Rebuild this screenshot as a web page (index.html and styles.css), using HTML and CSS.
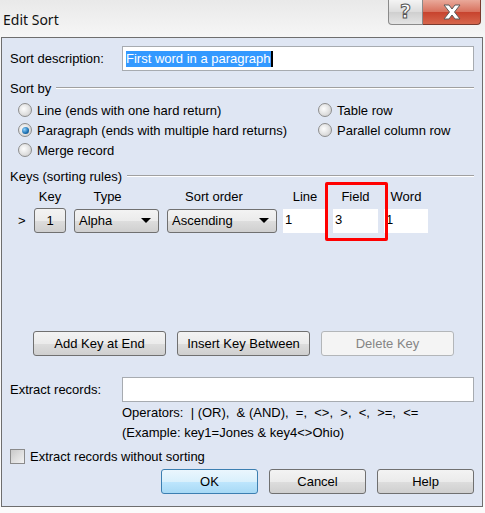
FILE: index.html
```html
<!DOCTYPE html>
<html lang="en">

<head>
  <meta charset="UTF-8">
  <title>Edit Sort</title>
  <link rel="stylesheet" href="styles.css">
</head>

<body>
  <div class="titlebar">
    <div class="title">Edit Sort</div>
    <div class="caption-buttons">
      <div class="cap-help">?</div>
      <div class="cap-close">
        <svg width="22" height="16" viewBox="0 0 22 16">
          <path d="M3 1 L8 1 L11 5 L14 1 L19 1 L13.5 8 L19 15 L14 15 L11 11 L8 15 L3 15 L8.5 8 Z" fill="#fff" stroke="#5a5a5a" stroke-width="1"/>
        </svg>
      </div>
    </div>
  </div>

  <div class="dialog">
    <div class="row desc-row">
      <label class="row-label">Sort description:</label>
      <div class="textbox"><span class="selected">First word in a paragraph</span><span class="caret"></span></div>
    </div>

    <div class="group-title"><span>Sort by</span><span class="rule"></span></div>
    <div class="radio-grid">
      <div class="radio"><span class="dot"></span>Line (ends with one hard return)</div>
      <div class="radio"><span class="dot"></span>Table row</div>
      <div class="radio"><span class="dot checked"></span>Paragraph (ends with multiple hard returns)</div>
      <div class="radio"><span class="dot"></span>Parallel column row</div>
      <div class="radio"><span class="dot"></span>Merge record</div>
    </div>

    <div class="group-title keys-title"><span>Keys (sorting rules)</span><span class="rule"></span></div>
    <div class="keys">
      <div class="keys-head">
        <span></span>
        <span>Key</span>
        <span class="shift-type">Type</span>
        <span class="shift-order">Sort order</span>
        <span>Line</span>
        <span>Field</span>
        <span>Word</span>
      </div>
      <div class="keys-row">
        <span class="pointer">&gt;</span>
        <div class="btn key-btn">1</div>
        <div class="select">Alpha<span class="arrow"></span></div>
        <div class="select">Ascending<span class="arrow"></span></div>
        <div class="cell">1</div>
        <div class="cell">3</div>
        <div class="cell">1</div>
      </div>
      <div class="highlight"></div>
    </div>

    <div class="key-actions">
      <div class="btn">Add Key at End</div>
      <div class="btn">Insert Key Between</div>
      <div class="btn disabled">Delete Key</div>
    </div>

    <div class="row extract-row">
      <label class="row-label">Extract records:</label>
      <div class="textbox"></div>
    </div>
    <div class="hint">
      <div>Operators:&nbsp; | (OR),&nbsp; &amp; (AND),&nbsp; =,&nbsp; &lt;&gt;,&nbsp; &gt;,&nbsp; &lt;,&nbsp; &gt;=,&nbsp; &lt;=</div>
      <div>(Example: key1=Jones &amp; key4&lt;&gt;Ohio)</div>
    </div>

    <div class="check"><span class="box"></span>Extract records without sorting</div>

    <div class="dialog-actions">
      <div class="btn default">OK</div>
      <div class="btn">Cancel</div>
      <div class="btn">Help</div>
    </div>
  </div>
</body>

</html>
```

FILE: styles.css
```css
body {
  margin: 0;
  width: 485px;
  height: 513px;
  overflow: hidden;
  background: linear-gradient(#e9e9e9, #f7f7f7 40px, #fbfbfb);
  font-family: "Liberation Sans", Arial, sans-serif;
  font-size: 13px;
  color: #000;
}

.titlebar {
  height: 37px;
  display: flex;
  justify-content: space-between;
  align-items: flex-start;
}

.title {
  font-family: "Noto Sans", "Open Sans", sans-serif;
  font-size: 14px;
  padding: 10px 0 0 3px;
  color: #111;
}

.caption-buttons {
  display: flex;
  margin-right: 4px;
}

.cap-help {
  width: 33px;
  height: 24px;
  border: 1px solid #8a8a8a;
  border-top: none;
  border-radius: 0 0 0 4px;
  background: linear-gradient(#f4f4f4, #dcdcdc 50%, #cfcfcf 51%, #e4e4e4);
  text-align: center;
  font-family: "DejaVu Sans", sans-serif;
  font-size: 19px;
  font-weight: bold;
  line-height: 23px;
  color: #fff;
  -webkit-text-stroke: 1px #555;
}

.cap-close {
  width: 57px;
  height: 24px;
  border: 1px solid #7a3a2e;
  border-top: none;
  border-left: none;
  border-radius: 0 0 4px 0;
  background: linear-gradient(#e9a99a, #d7705c 50%, #c7432e 51%, #d7664c);
  display: flex;
  align-items: center;
  justify-content: center;
}

.dialog {
  margin-left: 1px;
  width: 464px;
  height: 468px;
  border: 1px solid #6e6e6e;
  background: #dfe6f3;
  padding: 0 8px;
}

.row {
  display: flex;
  align-items: center;
}

.row-label {
  width: 112px;
  flex: none;
}

.textbox {
  flex: 1;
  height: 23px;
  border: 1px solid #a7abb0;
  background: #fff;
  display: flex;
  align-items: center;
  padding-left: 3px;
}

.desc-row {
  margin-top: 8px;
}

.selected {
  background: #3399ff;
  color: #fff;
  line-height: 16px;
}

.caret {
  width: 2px;
  height: 16px;
  background: #000;
}

.group-title {
  display: flex;
  align-items: center;
  gap: 5px;
  margin-top: 9px;
  height: 16px;
}

.rule {
  flex: 1;
  height: 1px;
  background: #a0a0a0;
  border-bottom: 1px solid #fff;
}

.radio-grid {
  display: grid;
  grid-template-columns: 300px 1fr;
  padding-left: 8px;
  margin-top: 4px;
}

.radio {
  display: flex;
  align-items: center;
  height: 20px;
  gap: 5px;
}

.dot {
  width: 12px;
  height: 12px;
  border-radius: 50%;
  border: 1px solid #8d8d8d;
  background: radial-gradient(circle at 40% 40%, #fdfdfd, #d8d8d8 70%, #c4c4c4);
  display: flex;
  align-items: center;
  justify-content: center;
}

.dot.checked::after {
  content: "";
  width: 7px;
  height: 7px;
  border-radius: 50%;
  background: radial-gradient(circle at 35% 35%, #8fd2ff, #1b6fb0 60%, #0b3f6e);
}

.keys-title {
  margin-top: 8px;
}

.keys {
  position: relative;
  margin-top: 5px;
}

.keys-head,
.keys-row {
  display: grid;
  grid-template-columns: 18px 32px 87px 112px 44px 45px 44px;
  column-gap: 6px;
}

.keys-head span {
  text-align: center;
  height: 14px;
}

.keys-head .shift-type {
  padding-right: 16px;
}

.keys-head .shift-order {
  padding-right: 14px;
}

.keys-row {
  margin-top: 5px;
  height: 24px;
  align-items: center;
}

.pointer {
  padding-left: 8px;
}

.btn {
  height: 23px;
  border: 1px solid #707070;
  border-radius: 3px;
  background: linear-gradient(#f3f3f3, #ebebeb 50%, #dddddd 51%, #cfcfcf);
  display: flex;
  align-items: center;
  justify-content: center;
}

.select {
  height: 22px;
  border: 1px solid #707070;
  border-radius: 3px;
  background: linear-gradient(#f3f3f3, #ebebeb 50%, #dddddd 51%, #cfcfcf);
  display: flex;
  align-items: center;
  justify-content: space-between;
  padding: 0 7px 0 4px;
  margin-left: 2px;
}

.arrow {
  width: 0;
  height: 0;
  border-left: 5px solid transparent;
  border-right: 5px solid transparent;
  border-top: 5px solid #000;
}

.cell {
  height: 24px;
  background: #fff;
  padding: 3px 2px 0;
  box-sizing: border-box;
}

.highlight {
  position: absolute;
  left: 315px;
  top: -7px;
  width: 57px;
  height: 53px;
  border: 3px solid #ff0000;
  border-radius: 2px;
}

.key-actions {
  display: flex;
  gap: 11px;
  margin: 99px 0 0 23px;
}

.key-actions .btn {
  width: 131px;
}

.btn.disabled {
  border-color: #b3b6b9;
  background: #f4f4f4;
  color: #858585;
}

.extract-row {
  margin-top: 21px;
}

.hint {
  margin-left: 112px;
  margin-top: 1px;
  line-height: 20px;
}

.check {
  display: flex;
  align-items: center;
  gap: 5px;
  margin-top: 5px;
  height: 17px;
}

.box {
  width: 13px;
  height: 13px;
  border: 1px solid #8a8a8a;
  background: linear-gradient(135deg, #c9c9c9, #f2f2f2);
}

.dialog-actions {
  display: flex;
  justify-content: flex-end;
  gap: 11px;
  margin-top: 4px;
}

.dialog-actions .btn {
  width: 95px;
}

.btn.default {
  border-color: #3c7fb1;
  background: linear-gradient(#eaf6fd, #d9f0fc 50%, #bee6fd 51%, #a7d9f5);
}
```
